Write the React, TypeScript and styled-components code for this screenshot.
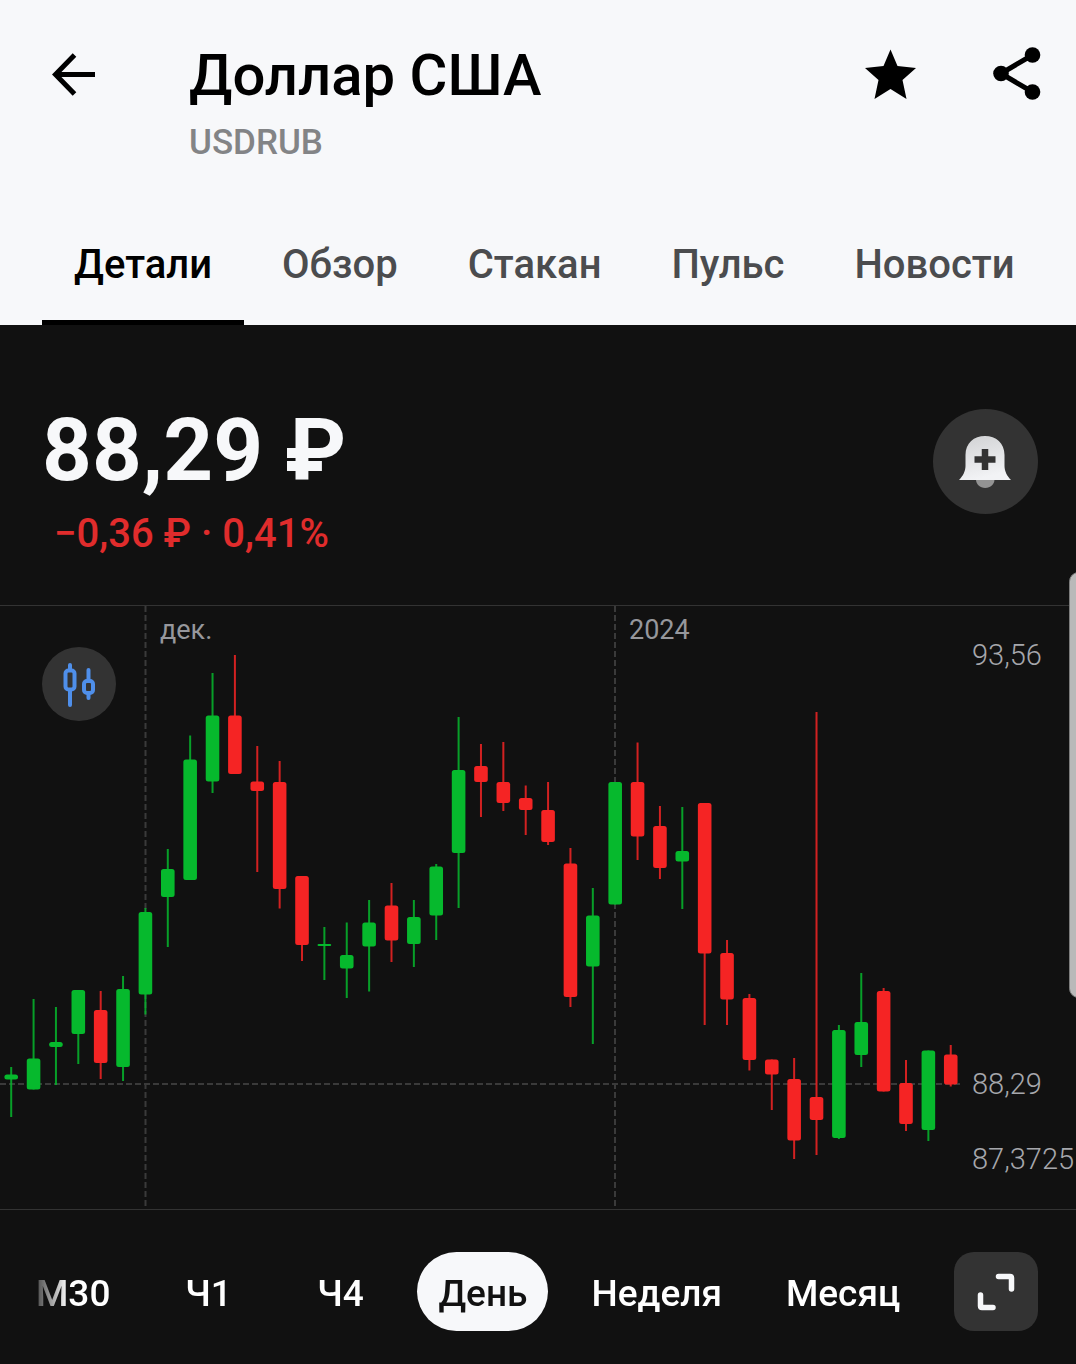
import React, { useState } from "react";
import styled, { createGlobalStyle } from "styled-components";

const GlobalStyle = createGlobalStyle`
  *, *::before, *::after { box-sizing: border-box; }
  body {
    margin: 0;
    background: #111111;
    font-family: Roboto, "Noto Sans", "Liberation Sans", sans-serif;
  }
  button { font: inherit; color: inherit; background: none; border: 0; padding: 0; cursor: pointer; }
  h1, p { margin: 0; }
  svg { display: block; }
`;

const Screen = styled.main`
  position: relative;
  overflow: hidden;
  color: #f7f8fa;
`;

const Header = styled.header`
  background: #f7f8fa;
  color: #000000;
`;

const TitleBar = styled.div`
  display: flex;
  align-items: flex-start;
  padding: 41px 27px 41px 42px;
`;

const TitleBlock = styled.div`
  flex: 1;
  min-width: 0;
  margin-left: 83px;
`;

const Title = styled.h1`
  font-size: 58px;
  line-height: 68px;
  font-weight: 500;
`;

const Ticker = styled.p`
  margin-top: 10px;
  font-size: 35px;
  line-height: 48px;
  font-weight: 500;
  color: #838486;
`;

const IconButton = styled.button`
  display: grid;
  place-items: center;
  width: 64px;
  height: 66px;
`;

const Actions = styled.div`
  display: flex;
  gap: 62px;
`;

const Tabs = styled.nav`
  display: flex;
  gap: 6px;
  padding-left: 42px;
`;

const Tab = styled.button<{ $active: boolean }>`
  padding: 33px 32px 31px;
  border-bottom: 5px solid ${(p) => (p.$active ? "#000000" : "transparent")};
  color: ${(p) => (p.$active ? "#000000" : "#4b4c4e")};
  font-size: 40px;
  line-height: 48px;
  font-weight: 500;
  white-space: nowrap;
`;

const Quote = styled.section`
  display: flex;
  justify-content: space-between;
  align-items: flex-start;
  padding: 73px 38px 47px 42px;
`;

const Price = styled.p`
  font-size: 87px;
  line-height: 104px;
  font-weight: 700;
`;

const Change = styled.p`
  margin-top: 8px;
  padding-left: 12px;
  font-size: 40px;
  line-height: 48px;
  font-weight: 500;
  color: #e02c2c;
`;

const AlertButton = styled.button`
  display: grid;
  place-items: center;
  width: 105px;
  height: 105px;
  margin-top: 11px;
  border-radius: 50%;
  background: #333333;
`;

const ChartPanel = styled.section`
  position: relative;
  display: flex;
  border-top: 1px solid #333333;
  border-bottom: 1px solid #333333;
`;

const Plot = styled.svg`
  flex: 1;
  min-width: 0;
  height: 603px;
`;

const MonthLabel = styled.text`
  font-size: 27px;
  fill: #96979c;
`;

const Axis = styled.div`
  display: flex;
  flex-direction: column;
  width: 104px;
  padding-top: 31px;
  font-size: 29px;
  line-height: 36px;
  font-weight: 300;
  color: #a6a7ac;
`;

const AxisLabel = styled.span<{ $gap?: number }>`
  margin-top: ${(p) => p.$gap ?? 0}px;
`;

const ChartTypeButton = styled.button`
  position: absolute;
  left: 42px;
  top: 41px;
  display: grid;
  place-items: center;
  width: 74px;
  height: 74px;
  border-radius: 50%;
  background: #333333;
`;

const EdgeHandle = styled.div`
  position: absolute;
  right: -12px;
  top: 572px;
  width: 19px;
  height: 426px;
  border: 1px solid #7c7c7c;
  border-radius: 14px;
  background: #b9b9b9;
`;

const Footer = styled.footer`
  display: flex;
  justify-content: space-between;
  padding: 42px 38px 33px 0;
`;

const Ranges = styled.div`
  display: flex;
  gap: 22px;
  padding-left: 15px;
  mask-image: linear-gradient(to right, transparent 26px, #000000 68px);
`;

const Range = styled.button<{ $active: boolean }>`
  min-width: 110px;
  height: 79px;
  padding: 4px 21px 0;
  border-radius: 40px;
  background: ${(p) => (p.$active ? "#f7f8fa" : "transparent")};
  color: ${(p) => (p.$active ? "#111111" : "#ffffff")};
  font-size: 37px;
  line-height: 48px;
  font-weight: 500;
  white-space: nowrap;
`;

const ExpandButton = styled.button`
  display: grid;
  place-items: center;
  width: 84px;
  height: 79px;
  border-radius: 20px;
  background: #333333;
`;

const GREEN = "#06b92d";
const RED = "#f52424";
const STEP = 22.37;

// [rising, high, body top, body bottom, low]
const candles: [number, number, number, number, number][] = [
  [1, 1067, 1074.5, 1079.5, 1117],
  [1, 999, 1058.5, 1089.5, 1089.5],
  [1, 1007, 1042, 1047, 1085],
  [1, 990, 990, 1034, 1064],
  [0, 991, 1010, 1063, 1079],
  [1, 976, 989, 1067, 1081],
  [1, 908, 912, 994.5, 1014.5],
  [1, 849, 869, 897, 947],
  [1, 735.5, 759.5, 880, 880],
  [1, 673, 715.5, 781.5, 793],
  [0, 655, 715.5, 774, 774],
  [0, 746, 781.5, 791, 872],
  [0, 761, 782, 889, 908.5],
  [0, 876, 876, 945, 961],
  [1, 927, 944, 946, 980],
  [1, 922.5, 955, 968.5, 998],
  [1, 900, 922.5, 946.5, 991.5],
  [0, 883, 905.5, 940.5, 962],
  [1, 900, 917, 944, 967],
  [1, 864, 866.5, 915.5, 940],
  [1, 717, 770, 853, 908],
  [0, 744, 766, 782, 817],
  [0, 742, 782, 803, 811],
  [0, 785.5, 798, 810, 835],
  [0, 782, 810, 842, 845],
  [0, 848, 863.5, 997, 1007],
  [1, 888, 915.5, 966.5, 1044],
  [1, 782, 782, 904.5, 904.5],
  [0, 742.5, 782, 836.5, 860],
  [0, 806, 826, 868, 879],
  [1, 807, 851, 861.5, 909],
  [0, 803, 803, 953.5, 1025],
  [0, 940, 953, 999.5, 1025],
  [0, 994, 998, 1060, 1070.5],
  [0, 1059.5, 1059.5, 1074.5, 1110],
  [0, 1058, 1079, 1140.5, 1159],
  [0, 712, 1097, 1120, 1155],
  [1, 1025, 1030, 1138, 1139],
  [1, 973, 1022, 1055, 1067],
  [0, 988, 991, 1091.5, 1091.5],
  [0, 1060, 1083, 1124, 1131],
  [1, 1050.5, 1050.5, 1130, 1141],
  [0, 1045, 1054.5, 1084.5, 1086.5],
];

const tabs = ["Детали", "Обзор", "Стакан", "Пульс", "Новости"];
const ranges = ["М30", "Ч1", "Ч4", "День", "Неделя", "Месяц"];

function CandleChart() {
  return (
    <Plot viewBox="0 606 972 603" preserveAspectRatio="xMaxYMin slice" role="img" aria-label="USDRUB, День">
      <g stroke="#3a3a3a" strokeWidth="2" fill="none">
        <path d="M145.5 606V1209" strokeDasharray="6 3" />
        <path d="M615 606V1209" strokeDasharray="6 3" />
        <path d="M0 1084H960" strokeDasharray="6 3" />
      </g>
      <MonthLabel x="160" y="639">дек.</MonthLabel>
      <MonthLabel x="629" y="639">2024</MonthLabel>
      {candles.map(([up, high, top, bottom, low], i) => {
        const x = 11.2 + i * STEP;
        const color = up ? GREEN : RED;
        const height = bottom - top;
        return (
          <g key={i} fill={color}>
            <rect x={x - 1} y={high} width="2" height={low - high} opacity="0.85" />
            <rect x={x - 6.8} y={top} width="13.6" height={height} rx={Math.min(2.5, height / 2)} />
          </g>
        );
      })}
    </Plot>
  );
}

export default function App() {
  const [tab, setTab] = useState("Детали");
  const [range, setRange] = useState("День");

  return (
    <Screen>
      <GlobalStyle />
      <Header>
        <TitleBar>
          <IconButton aria-label="Назад">
            <svg width="44" height="44" viewBox="0 0 44 44" fill="none" stroke="#000" strokeWidth="5">
              <path d="M43 22.500H5M22.500 3L3.500 22.500L22.500 42" />
            </svg>
          </IconButton>
          <TitleBlock>
            <Title>Доллар США</Title>
            <Ticker>USDRUB</Ticker>
          </TitleBlock>
          <Actions>
            <IconButton aria-label="В избранном">
              <svg width="52" height="50" viewBox="0 0 52 50">
                <path d="M25.500 0.500L32.500 17L51 19L37.500 31L41.500 50L25.500 40L9.500 50L13.500 31L0 19L18.500 17Z" />
              </svg>
            </IconButton>
            <IconButton aria-label="Поделиться">
              <svg width="48" height="54" viewBox="0 0 48 54">
                <path d="M39.500 8L8 26.500L39.500 45" fill="none" stroke="#000" strokeWidth="5" />
                <circle cx="39.500" cy="8" r="7.800" />
                <circle cx="8" cy="26.500" r="7.800" />
                <circle cx="39.500" cy="45" r="7.800" />
              </svg>
            </IconButton>
          </Actions>
        </TitleBar>
        <Tabs>
          {tabs.map((name) => (
            <Tab key={name} $active={name === tab} onClick={() => setTab(name)}>
              {name}
            </Tab>
          ))}
        </Tabs>
      </Header>

      <Quote>
        <div>
          <Price>88,29 ₽</Price>
          <Change>−0,36 ₽ · 0,41%</Change>
        </div>
        <AlertButton aria-label="Добавить уведомление">
          <svg width="53" height="52" viewBox="0 0 53 52">
            <defs>
              <linearGradient id="bell" x1="0" y1="0" x2="0.3" y2="1">
                <stop offset="0" stopColor="#d0d1d3" />
                <stop offset="1" stopColor="#f2f3f5" />
              </linearGradient>
            </defs>
            <path d="M17 43.500H35.500C35.500 48 31.500 52 26.200 52S17 48 17 43.500Z" fill="#939393" />
            <path
              d="M0 44C4 40 6.500 35 6.500 30V19C6.500 7 15 0 26 0S45.500 7 45.500 19V30C45.500 35 48 40 52 44Z"
              fill="url(#bell)"
            />
            <path d="M26 13V34M15.500 23.500H36.500" stroke="#333" strokeWidth="6.500" />
          </svg>
        </AlertButton>
      </Quote>

      <ChartPanel>
        <CandleChart />
        <Axis>
          <AxisLabel>93,56</AxisLabel>
          <AxisLabel $gap={393}>88,29</AxisLabel>
          <AxisLabel $gap={39}>87,3725</AxisLabel>
        </Axis>
        <ChartTypeButton aria-label="Тип графика">
          <svg width="34" height="46" viewBox="0 0 34 46" fill="none" stroke="#4f8fea" strokeWidth="4" strokeLinecap="round">
            <path d="M8 4V8M8 30V44M26.500 9V19M26.500 34V37" />
            <rect x="3.500" y="9.500" width="9" height="19" rx="3" />
            <rect x="22" y="20" width="9" height="12" rx="3" />
          </svg>
        </ChartTypeButton>
      </ChartPanel>

      <Footer>
        <Ranges>
          {ranges.map((name) => (
            <Range key={name} $active={name === range} onClick={() => setRange(name)}>
              {name}
            </Range>
          ))}
        </Ranges>
        <ExpandButton aria-label="На весь экран">
          <svg
            width="38"
            height="38"
            viewBox="0 0 38 38"
            fill="none"
            stroke="#f7f8fa"
            strokeWidth="5.500"
            strokeLinecap="round"
            strokeLinejoin="round"
          >
            <path d="M21.500 3.500H33Q34.500 3.500 34.500 5V16M3.500 22V33Q3.500 34.500 5 34.500H16" />
          </svg>
        </ExpandButton>
      </Footer>
      <EdgeHandle />
    </Screen>
  );
}
